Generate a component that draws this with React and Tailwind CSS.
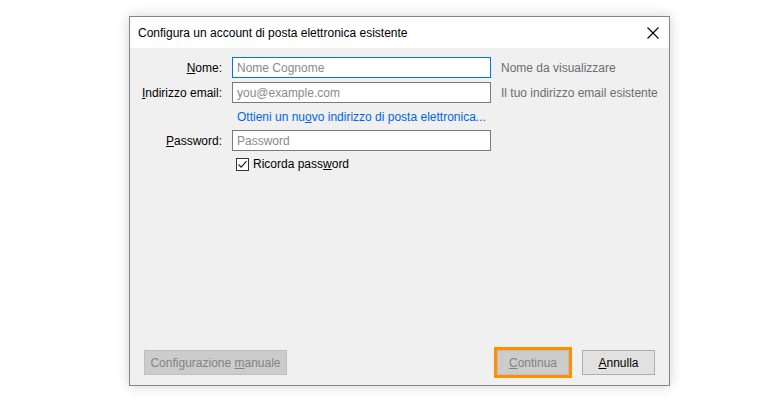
const font = { fontFamily: '"Liberation Sans", Arial, sans-serif' };

function Row({ accessKey, rest, border = 'border-[#7a7a7a]', placeholder, hint }) {
  return (
    <div className="flex items-center h-[21px]">
      <div className="w-[92px] shrink-0 text-right text-[12px] text-black whitespace-nowrap">
        <span className="underline underline-offset-[1px]">{accessKey}</span>
        {rest}
      </div>
      <div className={`w-[259px] shrink-0 h-[21px] ml-[10px] bg-white border ${border} flex items-center px-[4px] text-[12px] text-[#8a8a8a]`}>
        {placeholder}
      </div>
      {hint && <div className="ml-[10px] shrink-0 text-[12px] text-[#6d6d6d] whitespace-nowrap">{hint}</div>}
    </div>
  );
}

export default function App() {
  return (
    <div className="w-[780px] h-[402px] bg-white pt-[16px] pl-[129px]" style={font}>
      <div className="w-[541px] h-[370px] border border-[#858585] flex flex-col shadow-[0_0_12px_rgba(0,0,0,0.18)]">
        <div className="h-[31px] bg-white flex items-center justify-between pl-[8px] pr-[9px]">
          <span className="text-[12px] text-black">Configura un account di posta elettronica esistente</span>
          <svg width="12" height="12" viewBox="0 0 12 12" className="mr-[1px]">
            <path d="M0.5 0.5 L11.5 11.5 M11.5 0.5 L0.5 11.5" stroke="#000" strokeWidth="1.1" />
          </svg>
        </div>
        <div className="flex-1 bg-[#f0f0f0] flex flex-col pt-[9px] px-[14px] pb-[10px]">
          <div className="flex flex-col gap-[4px] -ml-[14px] -mr-[14px]">
            <Row accessKey="N" rest="ome:" border="border-[#0078d7]" placeholder="Nome Cognome" hint="Nome da visualizzare" />
            <Row accessKey="I" rest="ndirizzo email:" placeholder="you@example.com" hint="Il tuo indirizzo email esistente" />
            <div className="h-[19px] flex items-center pl-[107px] text-[12px] text-[#0066e8]">
              <span>Ottieni un nu<span className="underline underline-offset-[1px]">o</span>vo indirizzo di posta elettronica...</span>
            </div>
            <Row accessKey="P" rest="assword:" placeholder="Password" />
            <div className="h-[18px] flex items-center pl-[106px] text-[12px] text-black">
              <div className="w-[13px] h-[13px] border border-[#333] bg-white flex items-center justify-center">
                <svg width="11" height="11" viewBox="0 0 11 11">
                  <path d="M1.5 5.5 L4.2 8.2 L9.5 2.2" fill="none" stroke="#222" strokeWidth="1.2" />
                </svg>
              </div>
              <span className="ml-[4px]">Ricorda pass<span className="underline underline-offset-[1px]">w</span>ord</span>
            </div>
          </div>
          <div className="flex-1" />
          <div className="flex items-center">
            <div className="w-[143px] h-[25px] bg-[#cccccc] border border-[#bfbfbf] flex items-center justify-center text-[12px] text-[#838383]">
              <span>Configurazione <span className="underline underline-offset-[1px]">m</span>anuale</span>
            </div>
            <div className="flex-1" />
            <div className="w-[72px] h-[25px] bg-[#cccccc] border border-[#bfbfbf] outline-3 outline-solid outline-[#ff8f00] flex items-center justify-center text-[12px] text-[#838383]">
              <span><span className="underline underline-offset-[1px]">C</span>ontinua</span>
            </div>
            <div className="w-[73px] h-[25px] ml-[13px] bg-[#e1e1e1] border border-[#adadad] flex items-center justify-center text-[12px] text-black">
              <span><span className="underline underline-offset-[1px]">A</span>nnulla</span>
            </div>
          </div>
        </div>
      </div>
    </div>
  );
}
